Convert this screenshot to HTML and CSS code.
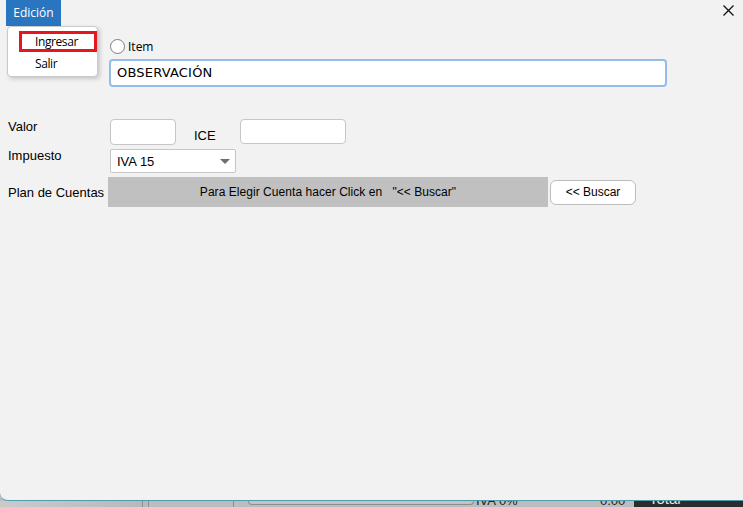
FILE: index.html
```html
<!DOCTYPE html>
<html>
<head>
    <title>Edición - Item</title>
    <link rel="stylesheet" href="styles.css">
</head>
<body>
    <div class="window">
        <div class="menubar">
            <div class="menu-tab">Edición</div>
            <div class="close-btn">
                <svg width="11" height="11" viewBox="0 0 11 11">
                    <path d="M0.5 0.5 L10.5 10.5 M10.5 0.5 L0.5 10.5" stroke="#111" stroke-width="1.3" fill="none"/>
                </svg>
            </div>
        </div>

        <!-- open menu -->
        <ul class="popup">
            <li class="popup-item selected">Ingresar</li>
            <li class="popup-item">Salir</li>
        </ul>

        <div class="form">
            <div class="item-row">
                <span class="radio"></span>
                <span class="radio-label">Item</span>
            </div>
            <div class="obs-input">OBSERVACIÓN</div>

            <div class="field-row valor-row">
                <div class="field-label">Valor</div>
                <div class="text-input valor-input"></div>
                <div class="ice-label">ICE</div>
                <div class="text-input ice-input"></div>
            </div>

            <div class="field-row impuesto-row">
                <div class="field-label">Impuesto</div>
                <div class="select">
                    <span>IVA 15</span>
                    <span class="arrow"></span>
                </div>
            </div>

            <div class="field-row plan-row">
                <div class="field-label">Plan de Cuentas</div>
                <div class="cuenta-bar">Para Elegir Cuenta hacer Click en   "&lt;&lt; Buscar"</div>
                <div class="buscar-btn">&lt;&lt; Buscar</div>
            </div>
        </div>
    </div>

    <!-- app behind the dialog -->
    <div class="under">
        <div class="under-seg seg-a"></div>
        <div class="under-seg seg-b"></div>
        <div class="under-seg seg-c"></div>
        <div class="under-seg seg-d"></div>
        <div class="under-box"></div>
        <div class="under-text iva">IVA 0%</div>
        <div class="under-text zero">0.00</div>
        <div class="total-panel"><span class="total-text">Total</span></div>
    </div>
</body>
</html>
```

FILE: styles.css
```css
body {
    margin: 0;
    width: 743px;
    height: 507px;
    overflow: hidden;
    background-color: #bdbdbd;
    font-family: "Liberation Sans", Arial, sans-serif;
    font-size: 13px;
    color: #000;
}

.window {
    position: relative;
    height: 501px;
    box-sizing: border-box;
    background-color: #f2f2f2;
    border-bottom: 1px solid #4f9bae;
    border-bottom-left-radius: 8px;
}

.menubar {
    height: 26px;
    display: flex;
    justify-content: space-between;
    padding-left: 6px;
}

.menu-tab {
    width: 55px;
    background-color: #2a75c0;
    color: white;
    font-family: "Open Sans", sans-serif;
    font-size: 12px;
    line-height: 26px;
    text-align: center;
}

.close-btn {
    margin: 5px 9px 0 0;
    width: 11px;
    height: 11px;
}

.close-btn svg {
    display: block;
}

.popup {
    position: absolute;
    left: 7px;
    top: 26px;
    width: 91px;
    height: 51px;
    box-sizing: border-box;
    margin: 0;
    padding: 0;
    list-style: none;
    background-color: white;
    border: 1px solid #c9c9c9;
    border-radius: 4px;
    box-shadow: 2px 2px 4px rgba(0, 0, 0, 0.18);
    font-family: "Open Sans", sans-serif;
    font-size: 12px;
    letter-spacing: -0.4px;
}

.popup-item {
    margin-left: 11px;
    margin-top: 4px;
    padding-left: 16px;
    line-height: 15px;
}

.popup-item.selected {
    width: 78px;
    height: 21px;
    box-sizing: border-box;
    border: 3px solid #e3171d;
    padding-left: 13px;
}

.form {
    padding: 12px 0 0 8px;
}

.item-row {
    height: 17px;
    display: flex;
    align-items: center;
    padding-left: 102px;
}

.radio {
    width: 15px;
    height: 15px;
    box-sizing: border-box;
    border: 1px solid #7d7d7d;
    border-radius: 50%;
    background-color: #fff;
}

.radio-label {
    margin-left: 3px;
    font-family: "Open Sans", sans-serif;
    font-size: 12px;
    line-height: 15px;
}

.obs-input {
    margin: 4px 0 0 101px;
    width: 558px;
    height: 28px;
    box-sizing: border-box;
    border: 2px solid #93bce6;
    border-radius: 4px;
    background-color: white;
    padding-left: 6px;
    font-family: "DejaVu Sans", sans-serif;
    font-size: 13px;
    line-height: 24px;
    letter-spacing: 0.2px;
}

.field-row {
    display: flex;
}

.field-label {
    width: 100px;
    line-height: 15px;
}

.text-input {
    box-sizing: border-box;
    background-color: white;
    border: 1px solid #c6c6c6;
    border-radius: 4px;
}

.valor-row {
    margin-top: 32px;
    height: 26px;
}

.valor-input {
    margin-left: 2px;
    width: 66px;
    height: 26px;
}

.ice-label {
    margin: 9px 0 0 18px;
    width: 22px;
    line-height: 15px;
}

.ice-input {
    margin-left: 24px;
    width: 106px;
    height: 25px;
}

.impuesto-row {
    margin-top: 4px;
}

.impuesto-row .field-label {
    margin-top: -1px;
}

.select {
    margin-left: 2px;
    width: 126px;
    height: 24px;
    box-sizing: border-box;
    background-color: white;
    border: 1px solid #c6c6c6;
    border-radius: 2px;
    display: flex;
    align-items: center;
    justify-content: space-between;
    padding: 0 5px 0 6px;
}

.arrow {
    width: 0;
    height: 0;
    border-left: 5px solid transparent;
    border-right: 5px solid transparent;
    border-top: 5px solid #6f6f6f;
}

.plan-row {
    margin-top: 4px;
    height: 30px;
    align-items: center;
}

.cuenta-bar {
    width: 440px;
    height: 30px;
    background-color: #c0c0c0;
    font-size: 12px;
    line-height: 30px;
    text-align: center;
    white-space: pre;
    letter-spacing: 0.05px;
}

.buscar-btn {
    margin-left: 2px;
    width: 86px;
    height: 25px;
    box-sizing: border-box;
    background-color: white;
    border: 1px solid #bcbcbc;
    border-radius: 6px;
    font-size: 12px;
    line-height: 23px;
    text-align: center;
}

/* strip of the main window below the dialog */
.under {
    height: 6px;
    display: flex;
    overflow: hidden;
}

.under-seg {
    height: 6px;
    border-right: 1px solid #8f8f8f;
}

.seg-a {
    width: 142px;
    background: linear-gradient(to right, #cacaca, #b9b9b9);
}

.seg-b {
    width: 5px;
    background-color: #bababa;
}

.seg-c {
    width: 84px;
    background-color: #bcbcbc;
}

.seg-d {
    width: 14px;
    border-right: none;
    background-color: #bdbdbd;
}

.under-box {
    width: 226px;
    height: 4px;
    box-sizing: border-box;
    border: 1px solid #8d8d8d;
    border-top: none;
    border-radius: 0 0 6px 6px;
    background-color: #c3c3c3;
}

.under-text {
    font-size: 13px;
    line-height: 13px;
    margin-top: -7px;
    color: #222;
}

.iva {
    margin-left: 2px;
    width: 124px;
}

.zero {
    width: 34px;
}

.total-panel {
    flex: 1;
    background-color: #2c2c2c;
    padding-left: 15px;
}

.total-text {
    display: block;
    margin-top: -10px;
    color: #e8e8e8;
    font-size: 15px;
    line-height: 15px;
}
```
